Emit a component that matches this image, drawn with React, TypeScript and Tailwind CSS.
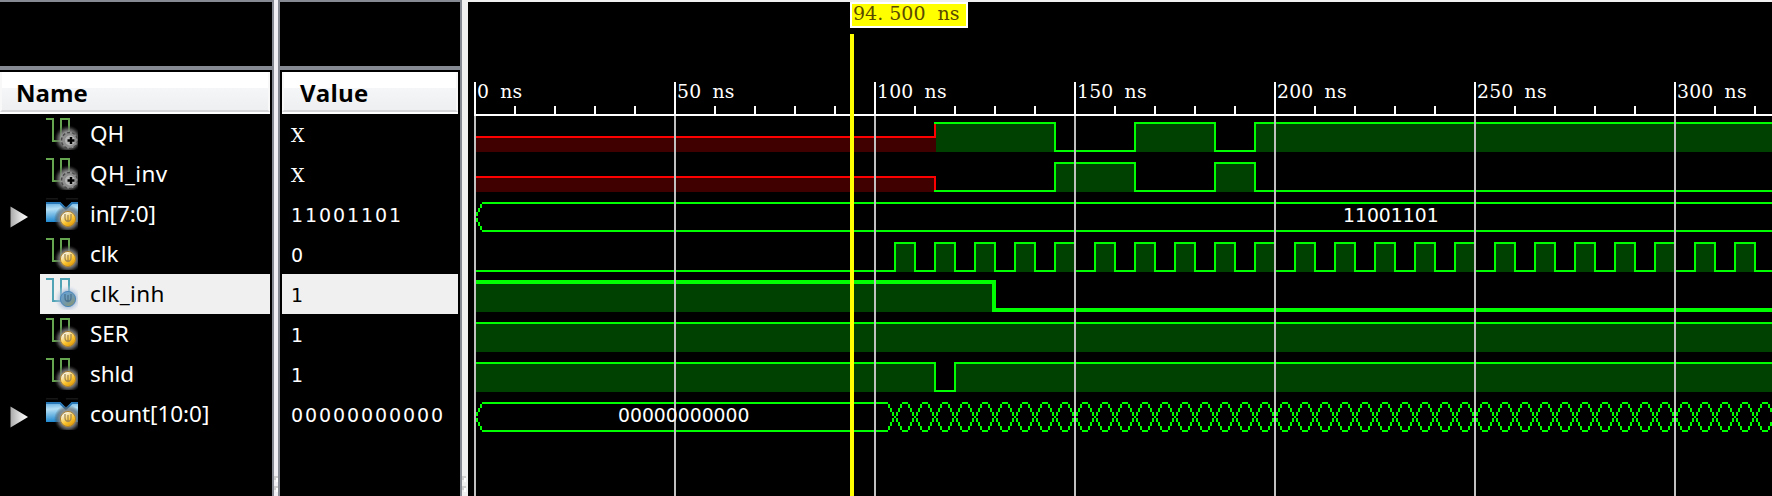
import React from "react";

type IconKind = "output" | "input" | "selected" | "bus";

interface Signal {
  name: string;
  value: string;
  icon: IconKind;
  expandable?: boolean;
  selected?: boolean;
}

const SIGNALS: Signal[] = [
  { name: "QH", value: "X", icon: "output" },
  { name: "QH_inv", value: "X", icon: "output" },
  { name: "in[7:0]", value: "11001101", icon: "bus", expandable: true },
  { name: "clk", value: "0", icon: "input" },
  { name: "clk_inh", value: "1", icon: "selected", selected: true },
  { name: "SER", value: "1", icon: "input" },
  { name: "shld", value: "1", icon: "input" },
  { name: "count[10:0]", value: "00000000000", icon: "bus", expandable: true },
];

const END = 330;
const GREEN = "#00ff00";
const FILL = "#004000";

const tx = (ns: number) => 475 + ns * 4;
const rowTop = (row: number) => 122 + row * 40;

function Defs() {
  return (
    <svg width="0" height="0" className="absolute">
      <defs>
        <radialGradient id="halo">
          <stop offset="0.5" stopColor="#9a9a9a" stopOpacity="0.95" />
          <stop offset="0.72" stopColor="#707070" stopOpacity="0.7" />
          <stop offset="1" stopColor="#303030" stopOpacity="0" />
        </radialGradient>
        <radialGradient id="haloBlue">
          <stop offset="0.5" stopColor="#8fabd0" stopOpacity="0.8" />
          <stop offset="1" stopColor="#dfe6ee" stopOpacity="0" />
        </radialGradient>
        <linearGradient id="gold" x1="0.1" y1="0" x2="0.8" y2="1">
          <stop offset="0.2" stopColor="#f6efd8" />
          <stop offset="0.6" stopColor="#fcc531" />
          <stop offset="1" stopColor="#d88f00" />
        </linearGradient>
        <linearGradient id="slate" x1="0" y1="0" x2="0.7" y2="1">
          <stop offset="0" stopColor="#6aa6dc" />
          <stop offset="0.6" stopColor="#7098ae" />
          <stop offset="1" stopColor="#8a9673" />
        </linearGradient>
        <linearGradient id="sky" x1="0.2" y1="0" x2="0.3" y2="1">
          <stop offset="0" stopColor="#5aa5dc" />
          <stop offset="0.35" stopColor="#b4dff5" />
          <stop offset="1" stopColor="#1b86cf" />
        </linearGradient>
        <linearGradient id="arrow" x1="0" y1="0" x2="1" y2="0">
          <stop offset="0" stopColor="#aaaaaa" />
          <stop offset="0.6" stopColor="#e4e4e4" />
          <stop offset="1" stopColor="#ffffff" />
        </linearGradient>
      </defs>
    </svg>
  );
}

function SignalIcon({ kind }: { kind: IconKind }) {
  const blue = kind === "selected";
  return (
    <svg width="32" height="32" viewBox="0 0 32 32" className="shrink-0">
      {kind === "bus" ? (
        <>
          <path d="M0 0H12M20 0H32" stroke="#161616" strokeWidth="3" />
          <path d="M0 4H14L20 10L26 4H32V24H0Z" fill="url(#sky)" />
          <path d="M0 5H14L20 11L26 5H32" fill="none" stroke="#2877b6" strokeWidth="2" />
        </>
      ) : (
        <path
          d="M0 1H7V23H15V1H23V14"
          fill="none"
          stroke={blue ? "#4fa3b5" : "#66a550"}
          strokeWidth="2"
          shapeRendering="crispEdges"
        />
      )}
      <circle cx="22" cy="21" r="14" fill={blue ? "url(#haloBlue)" : "url(#halo)"} />
      {kind === "output" ? (
        <>
          <circle cx="23.5" cy="22.5" r="8" fill="#8d8d8d" stroke="#4a4a4a" strokeWidth="1.5" strokeDasharray="3 2" />
          <circle cx="24" cy="22.5" r="5" fill="#b4b4b4" />
          <path d="M25 19V26M21.5 22.5H28.5" stroke="#000" strokeWidth="2.4" />
        </>
      ) : (
        <>
          <circle
            cx="22"
            cy="21"
            r="7.6"
            fill={blue ? "url(#slate)" : "url(#gold)"}
            stroke={blue ? "#4d87b8" : "#ab8130"}
            strokeWidth="1"
          />
          <path
            d="M19 16V20Q19 23 22 23.5Q25 23 25 20V16M22 17V23"
            fill="none"
            stroke={blue ? "#4a7390" : "#a68b52"}
            strokeWidth="1.3"
          />
        </>
      )}
    </svg>
  );
}

function Header({ title, className }: { title: string; className: string }) {
  return (
    <div
      className={`flex h-[42px] items-center border-b-2 border-white bg-white font-['Open_Sans','Noto_Sans',sans-serif] text-[24px] font-bold text-black ${className}`}
    >
      <div className="flex h-full w-full items-center border-x-2 border-b-2 border-x-[#f8f8f9] border-b-[#d5d5d7] bg-[linear-gradient(to_bottom,#ffffff_0px,#ffffff_16px,#f5f6f7_16px,#eeeff1_38px)]">
        <span className="pt-[3px]">{title}</span>
      </div>
    </div>
  );
}

function Grip() {
  return (
    <div className="mt-auto flex h-[20px] flex-col gap-[6px]">
      {[0, 1].map((i) => (
        <div key={i} className="h-1 w-1 bg-[#cfcfcf]">
          <div className="ml-[2px] h-1 w-[2px] translate-y-[2px] bg-white" />
        </div>
      ))}
    </div>
  );
}

function NameColumn() {
  return (
    <div className="flex w-[274px] shrink-0 flex-col border-t-2 border-r-2 border-[#868a92]">
      <div className="h-[68px] border-b-4 border-[#868a92]" />
      <div className="mt-[2px] mr-[2px] flex flex-col">
        <Header title="Name" className="[&>div]:pl-[14px]" />
        {SIGNALS.map((s) => (
          <div key={s.name} className="flex h-10">
            <div className="w-10 shrink-0 pt-3 pl-[10px]">
              {s.expandable && (
                <svg width="18" height="22" viewBox="0 0 18 22">
                  <path d="M0.5 0.5L18 11L0.5 21.5Z" fill="url(#arrow)" />
                </svg>
              )}
            </div>
            <div className={`flex flex-1 items-center pl-[6px] ${s.selected ? "bg-[#f0f0f0] text-black" : "text-white"}`}>
              <SignalIcon kind={s.icon} />
              <span
                className={`ml-3 font-['Noto_Sans','Open_Sans',sans-serif] text-[22.5px] leading-10 whitespace-nowrap ${
                  s.name.includes("_") ? "tracking-[0.35px]" : "tracking-[-0.05px]"
                }`}
              >
                {s.name}
              </span>
            </div>
          </div>
        ))}
      </div>
    </div>
  );
}

function ValueColumn() {
  return (
    <div className="flex w-[184px] shrink-0 flex-col border-x-2 border-t-2 border-[#868a92]">
      <div className="h-[68px] border-b-4 border-[#868a92]" />
      <div className="mx-[2px] mt-[2px] flex flex-col">
        <Header title="Value" className="[&>div]:pl-[16px] [&>div]:tracking-[0.2px]" />
        {SIGNALS.map((s) => (
          <div
            key={s.name}
            className={`h-10 pl-[9px] text-[19px] leading-[42px] whitespace-nowrap ${
              s.selected ? "bg-[#f0f0f0] text-black" : "text-white"
            } ${
              s.value === "X"
                ? "font-['DejaVu_Serif',serif]"
                : "font-['DejaVu_Sans',sans-serif] tracking-[1.91px]"
            }`}
          >
            {s.value}
          </div>
        ))}
      </div>
    </div>
  );
}

interface LogicProps {
  row: number;
  start?: number;
  level: 0 | 1;
  edges: number[];
  width?: number;
}

function Logic({ row, start = 0, level, edges, width = 2 }: LogicProps) {
  const top = rowTop(row);
  const bottom = top + 30;
  const half = width / 2;
  const shift = 1 - half;
  const hi = (width === 4 ? top - 2 : top) + half;
  const lo = bottom - half;
  let cur = level;
  let line = `M${tx(start) - 1} ${cur ? hi : lo}`;
  const fills: [number, number][] = [];
  let from = start;
  for (const e of edges) {
    if (cur) fills.push([from, e]);
    const x = tx(e) + shift;
    line += `H${x}V${cur ? lo : hi}`;
    cur = cur ? 0 : 1;
    from = e;
  }
  if (cur) fills.push([from, END]);
  line += `H${tx(END)}`;
  return (
    <g>
      {fills.map(([a, b]) => (
        <rect key={a} x={tx(a) + 1} y={hi} width={tx(b) - tx(a) - 1} height={bottom - hi} fill={FILL} />
      ))}
      <path d={line} fill="none" stroke={GREEN} strokeWidth={width} />
    </g>
  );
}

function Unknown({ row, until, rising }: { row: number; until: number; rising: boolean }) {
  const top = rowTop(row);
  return (
    <g>
      <rect x={476} y={top + 15} width={tx(until) + 1 - 476} height={15} fill="#400000" />
      <path
        d={`M476 ${top + 15}H${tx(until)}${rising ? `V${top + 2}` : `M${tx(until)} ${top + 14}V${top + 28}`}`}
        fill="none"
        stroke="#ff0000"
        strokeWidth={2}
      />
    </g>
  );
}

function crossing(ns: number, row: number, left: boolean) {
  const x = tx(ns) - 1;
  const y = rowTop(row) + 14;
  let d = `M${x} ${y}h2v2h-2z`;
  for (let k = 1; k <= 3; k++) {
    const up = y - 4 * k;
    const down = y + 4 * k - 2;
    for (const side of left ? [-1, 1] : [1]) {
      d += `M${x + side * 2 * k} ${up}h2v4h-2z`;
      d += `M${x + side * 2 * k} ${down}h2v4h-2z`;
    }
  }
  return d;
}

function Bus({ row, changes }: { row: number; changes: number[] }) {
  const top = rowTop(row);
  const points = [0, ...changes];
  let d = "";
  points.forEach((p, i) => {
    const next = points[i + 1] ?? END + 5;
    const a = tx(p) + 7;
    const b = tx(next) - 7;
    d += `M${a} ${top}H${b}V${top + 2}H${a}ZM${a} ${top + 28}H${b}V${top + 30}H${a}Z`;
    d += crossing(p, row, i > 0);
  });
  return <path d={d} fill={GREEN} />;
}

const range = (from: number, to: number, step: number) =>
  Array.from({ length: Math.floor((to - from) / step) + 1 }, (_, i) => from + i * step);

function Waveforms() {
  const majors = range(0, 300, 50);
  return (
    <svg
      width="1304"
      height="494"
      viewBox="468 2 1304 494"
      shapeRendering="crispEdges"
      className="block font-['DejaVu_Sans',sans-serif] text-[18.8px]"
    >
      <Unknown row={0} until={115} rising />
      <Unknown row={1} until={115} rising={false} />
      <Logic row={0} start={115} level={1} edges={[145, 165, 185, 195]} />
      <Logic row={1} start={115} level={0} edges={[145, 165, 185, 195]} />
      <Bus row={2} changes={[]} />
      <Logic row={3} level={0} edges={range(105, 325, 5)} />
      <Logic row={4} level={1} edges={[130]} width={4} />
      <Logic row={5} level={1} edges={[]} />
      <Logic row={6} level={1} edges={[115, 120]} />
      <Bus row={7} changes={range(105, 330, 5)} />
      {majors.map((t) => (
        <rect key={t} x={tx(t) - 1} y={116} width={2} height={380} fill="#c0c0c0" />
      ))}
      <rect x={474} y={114} width={1298} height={2} fill="#fff" />
      {range(0, 320, 10).map((t) => {
        const y = t % 50 === 0 ? 82 : 106;
        return <rect key={t} x={tx(t) - 1} y={y} width={2} height={116 - y} fill="#fff" />;
      })}
      {majors.map((t) => (
        <text key={t} x={tx(t) + 2} y={98} fill="#fff" className="font-['DejaVu_Serif',serif] [word-spacing:5px] tracking-[0.2px]">
          {t} ns
        </text>
      ))}
      <text x={1343} y={222} fill="#fff">
        11001101
      </text>
      <text x={618} y={422} fill="#fff">
        00000000000
      </text>
      <rect x={850} y={34} width={4} height={462} fill="#ffff00" />
    </svg>
  );
}

export default function App() {
  return (
    <div className="flex h-[496px] w-[1772px] overflow-hidden bg-black">
      <Defs />
      <NameColumn />
      <div className="flex w-1 shrink-0 bg-[#f0f0f4]">
        <Grip />
      </div>
      <ValueColumn />
      <div className="flex w-[6px] shrink-0 bg-[#f0f0f0]">
        <Grip />
      </div>
      <div className="relative w-[1304px] shrink-0 border-t-2 border-[#f0f0f0]">
        <Waveforms />
        <div className="absolute top-0 left-[382px] h-[26px] w-[118px] border-2 border-white bg-[#ffff00] pl-[1px] font-['DejaVu_Serif',serif] text-[19px] leading-[19px] whitespace-nowrap text-[#5a4a00] [word-spacing:6px]">
          94<span className="tracking-[6px]">.</span>500 ns
        </div>
      </div>
    </div>
  );
}
